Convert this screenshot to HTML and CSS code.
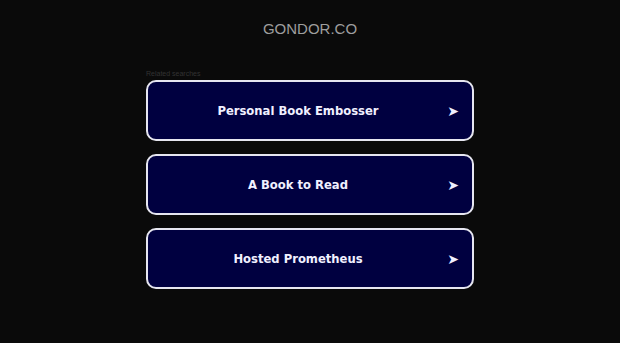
FILE: index.html
```html
<!DOCTYPE html>
<html>
<head>
<meta charset="utf-8">
<link rel="stylesheet" href="styles.css">
</head>
<body>
<div class="page">
  <header class="header">GONDOR.CO</header>
  <main class="content">
    <div class="label">Related searches</div>
    <ul class="links">
      <li class="link"><span class="text">Personal Book Embosser</span><span class="arrow">➤</span></li>
      <li class="link"><span class="text">A Book to Read</span><span class="arrow">➤</span></li>
      <li class="link"><span class="text">Hosted Prometheus</span><span class="arrow">➤</span></li>
    </ul>
  </main>
</div>
</body>
</html>
```
FILE: styles.css
```css
html, body {
  margin: 0;
  padding: 0;
  background: #0a0a0a;
}
.page {
  width: 620px;
  height: 343px;
  display: flex;
  flex-direction: column;
  align-items: center;
  font-family: "DejaVu Sans", sans-serif;
}
.header {
  margin-top: 20px;
  height: 18px;
  line-height: 18px;
  font-family: "Liberation Sans", Arial, sans-serif;
  font-size: 15px;
  letter-spacing: 0;
  color: #9e9e9e;
}
.content {
  width: 328px;
  margin-top: 31px;
}
.label {
  font-family: "Liberation Sans", Arial, sans-serif;
  font-size: 7px;
  color: #333;
  height: 10px;
  line-height: 10px;
  margin-bottom: 1px;
}
.links {
  list-style: none;
  margin: 0;
  padding: 0;
  display: flex;
  flex-direction: column;
  gap: 13px;
}
.link {
  box-sizing: border-box;
  height: 61px;
  padding-right: 24px;
  border: 2px solid #e6e6f0;
  border-radius: 10px;
  background: #000040;
  display: flex;
  align-items: center;
  justify-content: center;
  position: relative;
  color: #f0f0ff;
}
.text {
  font-weight: bold;
  font-size: 11.6px;
}
.arrow {
  position: absolute;
  right: 13px;
  top: 50%;
  transform: translateY(-50%);
  font-size: 14px;
  line-height: 1;
}
```
